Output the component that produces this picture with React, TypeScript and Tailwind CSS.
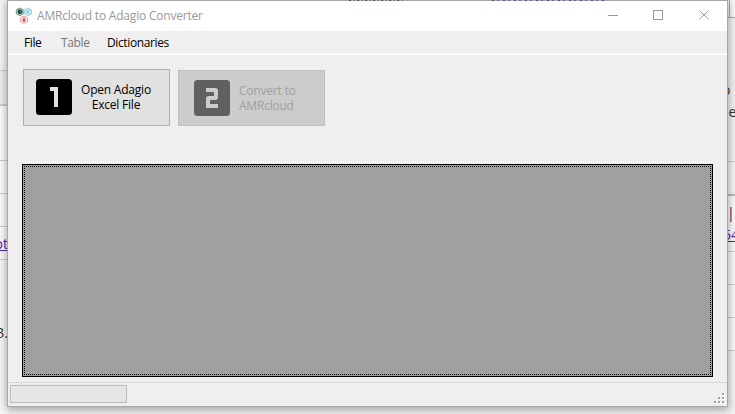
import React from "react";

const uiFont = "font-['Open_Sans','Noto_Sans',sans-serif]";

function AppLogo() {
  return (
    <svg width="18" height="18" viewBox="0 0 18 18" className="block shrink-0">
      <path d="M4.8 1 8.2 2.8v4L4.8 8.7 1.3 6.8v-4z" fill="#a9bdb5" stroke="#739185" strokeWidth=".9" />
      <circle cx="4.9" cy="4.7" r="2.2" fill="#174d3b" />
      <circle cx="5.5" cy="4.2" r=".7" fill="#679b86" />
      <path d="M13 1l3.5 1.8v4L13 8.7 9.5 6.8v-4z" fill="#d9f0fa" stroke="#8fcbe6" strokeWidth=".9" />
      <path d="M10.8 5.9 14.8 3.2M11.4 3.6l1.6.5m-.2 2.2 2-.3" stroke="#5fb2da" strokeWidth=".9" />
      <path d="M9 8.8l3.5 1.9v3.8L9 16.4l-3.5-1.9v-3.8z" fill="#fdeaec" stroke="#ee8f98" strokeWidth=".9" />
      <path d="M9 10.2v4.2M7.7 12.6h2.6M7.7 14h2.6" stroke="#d83345" strokeWidth="1.1" />
    </svg>
  );
}

function NumberOne() {
  return (
    <svg width="36" height="36" viewBox="0 0 36 36" className="block shrink-0">
      <rect width="36" height="36" rx="3.5" fill="#000" />
      <path d="M14 8h8v20h-4V12h-4z" fill="#e1e1e1" />
    </svg>
  );
}

function NumberTwo() {
  return (
    <svg width="36" height="36" viewBox="0 0 36 36" className="block shrink-0">
      <rect width="36" height="36" rx="3.5" fill="#606060" />
      <path d="M12 8h10.3L24 9.7v8.6L22.3 20H16v4h8v4H12V17.7l1.7-1.7H20v-4h-8z" fill="#cccccc" />
    </svg>
  );
}

function TitleBar() {
  return (
    <div className="flex h-[30px] items-center bg-white pl-[7px] text-[#999]">
      <AppLogo />
      <span className="ml-1 text-[12px] leading-[20px] tracking-[-0.2px] whitespace-nowrap">AMRcloud to Adagio Converter</span>
      <svg width="120" height="14" viewBox="0 0 120 14" className="ml-auto mt-[-2px] block" fill="none" stroke="#999" shapeRendering="crispEdges">
        <path d="M1 7.5h10" />
        <rect x="46.5" y="2.5" width="9" height="9" />
        <path d="m92.5 2.5 9 9m0-9-9 9" shapeRendering="auto" />
      </svg>
    </div>
  );
}

function MenuBar() {
  return (
    <nav className="flex h-[24px] border-b border-white bg-[#efefef] pl-[16px] text-[12px] leading-[24px] tracking-[-0.38px] whitespace-nowrap text-black shadow-[inset_0_-1px_0_#f7f7f7]">
      <span className="w-[37px]">File</span>
      <span className="w-[46px] text-[#777]">Table</span>
      <span>Dictionaries</span>
    </nav>
  );
}

function Backdrop() {
  return (
    <div className="flex h-full justify-between text-[14px] leading-[20px]">
      <div className="flex w-[8px] flex-col overflow-hidden">
        <div className="h-[70px] bg-[#f7f5f4]" />
        <div className="h-[36px] border-t border-b-2 border-[#ccc] bg-[#ececec]" />
        <div className="h-[55px] border-b border-[#ccc] bg-[#fbfbfb]" />
        <div className="h-[33px] border-b border-[#ccc] bg-[#fbfbfb]" />
        <div className="h-[33px] border-b border-[#ccc] bg-[#fbfbfb]" />
        <div className="flex h-[33px] justify-end border-b border-[#ccc] bg-[#fbfbfb] pt-[7px] text-[#4b25bd] underline">ot</div>
        <div className="flex h-[154px] justify-end bg-[#f9f8f7] pt-[63px] text-[#333]">3.</div>
      </div>
      <div className="flex w-[8px] flex-col overflow-hidden whitespace-nowrap">
        <div className="h-[18px] border-b border-[#aaa] bg-[#f8f8f8] pl-[2px]"><div className="h-full w-px bg-[#aaa]" /></div>
        <div className="h-[144px] border-b border-[#ccc] bg-[#f3f1f0] pt-[62px] text-[#333]">
          <div className="-ml-[5px] h-[22px]">o</div>
          <div className="-ml-[7px]">ne</div>
        </div>
        <div className="h-[34px] border-b-2 border-[#bbb] bg-[#f3f3f3]" />
        <div className="h-[56px] border-b border-[#ccc] bg-[#fafafa] pt-[7px]">
          <div className="h-[22px] text-[#222a55]">|</div>
          <div className="-ml-[4px] text-[#4b25bd] underline">54</div>
        </div>
        <div className="h-[33px] border-b border-[#ccc] bg-[#fafafa]" />
        <div className="h-[33px] border-b border-[#ccc] bg-[#fafafa]" />
        <div className="h-[33px] border-b border-[#ccc] bg-[#fafafa]" />
        <div className="flex-1 bg-[#f5f3f1]" />
      </div>
    </div>
  );
}

export default function App() {
  return (
    <main className={`relative h-[414px] w-[735px] overflow-hidden bg-[#f5f3f1] ${uiFont}`}>
      <Backdrop />
      <section className="absolute left-[7px] top-0 flex h-[407px] w-[721px] flex-col border border-[#a7a7a7] bg-[#efefef] shadow-[0_2px_8px_1px_rgba(0,0,0,0.32)]">
        <TitleBar />
        <MenuBar />
        <div className="flex h-[109px] gap-2 px-[15px] pt-[14px]">
          <button className="flex h-[57px] w-[147px] items-start border border-[#adadad] bg-[#e1e1e1] pl-[12px] pt-[9px]">
            <NumberOne />
            <span className="ml-[9px] mt-[3px] w-[70px] text-center text-[12px] leading-[15px] tracking-[-0.22px] whitespace-nowrap">Open Adagio<br />Excel File</span>
          </button>
          <button disabled className="mt-px flex h-[56px] w-[147px] items-start border border-[#bfbfbf] bg-[#cccccc] pl-[15px] pt-[9px]">
            <NumberTwo />
            <span className="ml-[9px] mt-[3px] text-left text-[12px] leading-[15px] tracking-[-0.22px] whitespace-nowrap text-[#a0a0a0]">Convert to<br />AMRcloud</span>
          </button>
        </div>
        <div className="ml-[14px] h-[213px] w-[691px] border border-black bg-[#a0a0a0] p-px">
          <svg width="687" height="209" className="block" fill="none" stroke="#000" strokeDasharray="1 1" shapeRendering="crispEdges">
            <path d="M0 .5h687M0 208.5h687M.5 0v209M686.5 0v209" />
          </svg>
        </div>
        <footer className="mt-[5px] flex flex-1 justify-between border-t border-[#d7d7d7] pl-[2px] pt-[2px]">
          <div className="h-[18px] w-[117px] border border-[#bcbcbc] bg-[#e6e6e6]" />
          <svg width="13" height="13" className="mr-[1px] mt-[7px] block" shapeRendering="crispEdges">
            <path d="M10 2h2v2h-2zM6 6h2v2H6zM10 6h2v2h-2zM2 10h2v2H2zM6 10h2v2H6zM10 10h2v2h-2z" fill="#fff" />
            <path d="M9 1h2v2H9zM5 5h2v2H5zM9 5h2v2H9zM1 9h2v2H1zM5 9h2v2H5zM9 9h2v2H9z" fill="#a0a0a0" />
          </svg>
        </footer>
      </section>
      <div className="absolute left-[349px] top-0 flex h-px w-[255px] justify-between">
        <div className="w-[56px] bg-[repeating-linear-gradient(90deg,#514c4c_0_2px,#aaa_2px_5px,#776056_5px_6px,#aaa_6px_8px)]" />
        <div className="w-[112px] bg-[repeating-linear-gradient(90deg,#5a419f_0_2px,#aaa_2px_5px,#7757a8_5px_7px,#aaa_7px_11px)]" />
      </div>
    </main>
  );
}
